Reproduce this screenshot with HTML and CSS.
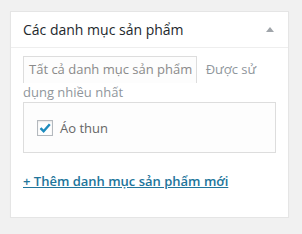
FILE: index.html
```html
<!DOCTYPE html>
<html>
<head>
    <title>Các danh mục sản phẩm</title>
    <link rel="stylesheet" href="styles.css">
</head>
<body>
    <div class="postbox">
        <div class="postbox-header">
            <h2>Các danh mục sản phẩm</h2>
            <span class="toggle-arrow"></span>
        </div>
        <div class="inside">
            <ul class="category-tabs">
                <li class="tabs">Tất cả danh mục sản phẩm</li>
                <li class="hide-if-no-js">Được sử dụng nhiều nhất</li>
            </ul>
            <div class="tabs-panel">
                <label class="cat-item">
                    <span class="checkbox checked">
                        <svg width="14" height="14" viewBox="0 0 14 14"><path d="M2.5 7.2 L5.6 10.2 L11.8 3.2" fill="none" stroke="#1e8cbe" stroke-width="2.4"/></svg>
                    </span>
                    Áo thun
                </label>
            </div>
            <p class="category-adder"><a href="#">+ Thêm danh mục sản phẩm mới</a></p>
        </div>
    </div>
</body>
</html>
```

FILE: styles.css
```css
body {
    margin: 0;
    background: #f1f1f1;
    font-family: "Open Sans", "Liberation Sans", sans-serif;
    font-size: 13px;
    color: #444;
}

.postbox {
    margin: 11px 0 0 10px;
    width: 277px;
    height: 205px;
    background: #fff;
    border: 1px solid #e5e5e5;
    box-shadow: 0 1px 1px rgba(0, 0, 0, 0.04);
}

.postbox-header {
    display: flex;
    align-items: center;
    justify-content: space-between;
    height: 35px;
    padding: 0 12px;
    border-bottom: 1px solid #eee;
}

.postbox-header h2 {
    margin: 0;
    font-size: 14px;
    font-weight: 400;
    color: #23282d;
}

.toggle-arrow {
    width: 0;
    height: 0;
    margin-right: 2px;
    border-left: 4px solid transparent;
    border-right: 4px solid transparent;
    border-bottom: 5px solid #a0a5aa;
}

.inside {
    padding: 8px 12px 0;
}

.category-tabs {
    margin: 0;
    padding: 0;
    list-style: none;
    line-height: 18px;
}

.category-tabs li {
    display: inline;
    color: #8f969c;
}

.category-tabs .tabs {
    display: inline-block;
    padding: 3px 4px 5px 5px;
    margin-right: 5px;
    border: 1px solid #ddd;
    border-bottom: none;
    background: #fdfdfd;
    color: #8a8a8a;
}

.tabs-panel {
    height: 49px;
    margin-top: 1px;
    padding: 0 13px;
    border: 1px solid #ddd;
    background: #fdfdfd;
    display: flex;
    align-items: center;
}

.cat-item {
    display: flex;
    align-items: center;
    gap: 7px;
    color: #666;
}

.checkbox {
    width: 14px;
    height: 14px;
    border: 1px solid #b4b9be;
    background: #fff;
    box-shadow: inset 0 1px 2px rgba(0, 0, 0, 0.1);
    display: flex;
    align-items: center;
    justify-content: center;
}

.category-adder {
    margin: 19px 0 0;
}

.category-adder a {
    color: #21759b;
    font-weight: 600;
    text-decoration: underline;
}
```
